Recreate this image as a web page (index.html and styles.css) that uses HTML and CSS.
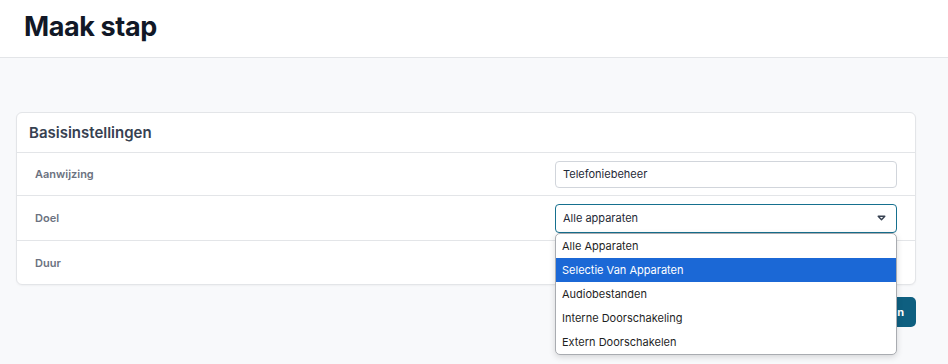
FILE: index.html
```html
<!DOCTYPE html>
<html lang="nl">
<head>
    <meta charset="UTF-8">
    <meta name="viewport" content="width=device-width, initial-scale=1.0">
    <title>Maak stap</title>
    <link rel="stylesheet" href="styles.css">
</head>
<body>
    <header class="page-header">
        <h1>Maak stap</h1>
    </header>

    <main class="page-body">
        <section class="card">
            <div class="card-header">
                <h2>Basisinstellingen</h2>
            </div>

            <div class="form-row">
                <label class="form-label">Aanwijzing</label>
                <div class="form-field">
                    <div class="input">Telefoniebeheer</div>
                </div>
            </div>

            <div class="form-row form-row-tall">
                <label class="form-label">Doel</label>
                <div class="form-field">
                    <div class="select">
                        <span>Alle apparaten</span>
                        <svg class="select-arrow" width="9" height="6" viewBox="0 0 9 6">
                            <path d="M1.2 1.2 H7.8 L4.5 4.8 Z" fill="#fff" stroke="#374151" stroke-width="1.4" stroke-linejoin="round"/>
                        </svg>
                    </div>
                    <ul class="dropdown">
                        <li>Alle Apparaten</li>
                        <li class="active">Selectie Van Apparaten</li>
                        <li>Audiobestanden</li>
                        <li>Interne Doorschakeling</li>
                        <li>Extern Doorschakelen</li>
                    </ul>
                </div>
            </div>

            <div class="form-row">
                <label class="form-label">Duur</label>
                <div class="form-field"></div>
            </div>
        </section>

        <div class="actions">
            <button type="button" class="btn-primary">Opslaan</button>
        </div>
    </main>
</body>
</html>
```

FILE: styles.css
```css
/* basic page setup */
* {
    box-sizing: border-box;
}

html, body {
    min-height: 100vh;
}

body {
    margin: 0;
    font-family: Inter, "Liberation Sans", Arial, sans-serif;
    background-color: #f8f9fb; /* very light gray */
    color: #111827;
}

.page-header {
    background-color: #fff;
    border-bottom: 1px solid #e3e5e8;
    height: 58px;
    padding: 0 24px;
    display: flex;
    align-items: center;
}

.page-header h1 {
    margin: 0;
    font-size: 27px;
    font-weight: 700;
    letter-spacing: -0.4px;
    color: #111827;
    position: relative;
    top: -2px;
}

.page-body {
    padding: 54px 32px 40px 16px;
}

.card {
    background-color: #fff;
    border: 1px solid #e3e5e8;
    border-radius: 6px;
    box-shadow: 0 1px 2px rgba(0, 0, 0, 0.04);
}

.card-header {
    height: 40px;
    padding: 0 12px;
    display: flex;
    align-items: center;
    border-bottom: 1px solid #e3e5e8;
}

.card-header h2 {
    margin: 0;
    font-size: 15px;
    font-weight: 600;
    color: #374151;
}

.form-row {
    display: grid;
    grid-template-columns: 1fr 342px;
    gap: 20px;
    align-items: center;
    padding: 0 18px;
    height: 43px;
    border-bottom: 1px solid #e3e5e8;
}

.form-row-tall {
    height: 45px;
}

.form-row:last-child {
    border-bottom: none;
}

.form-label {
    font-size: 11px;
    font-weight: 600;
    color: #6b7280;
}

.form-field {
    position: relative;
}

.input {
    height: 27px;
    padding: 0 7px;
    display: flex;
    align-items: center;
    font-size: 11px;
    color: #1f2937;
    border: 1px solid #d1d5db;
    border-radius: 4px;
}

.select {
    height: 29px;
    padding: 0 7px;
    display: flex;
    align-items: center;
    justify-content: space-between;
    font-size: 11px;
    color: #1f2937;
    border: 1px solid #16708f; /* focused teal border */
    border-radius: 4px;
}

.select-arrow {
    margin-right: 3px;
}

/* open native-looking option list */
.dropdown {
    position: absolute;
    top: 29px;
    left: 0;
    right: 0;
    z-index: 10;
    margin: 0;
    padding: 0;
    list-style: none;
    background-color: #fff;
    border: 1px solid #a9acb1;
    border-radius: 5px;
    box-shadow: 0 2px 6px rgba(0, 0, 0, 0.15);
    overflow: hidden;
}

.dropdown li {
    height: 24px;
    padding: 0 6px;
    display: flex;
    align-items: center;
    font-size: 11px;
    color: #1f1f1f;
}

.dropdown li.active {
    background-color: #1b68d6;
    color: #fff;
}

.actions {
    display: flex;
    justify-content: flex-end;
    margin-top: 12px;
}

.btn-primary {
    height: 30px;
    padding: 0 12px;
    font-family: inherit;
    font-size: 11px;
    font-weight: 700;
    color: #fff;
    background-color: #0e5f80;
    border: none;
    border-radius: 5px;
}
```
